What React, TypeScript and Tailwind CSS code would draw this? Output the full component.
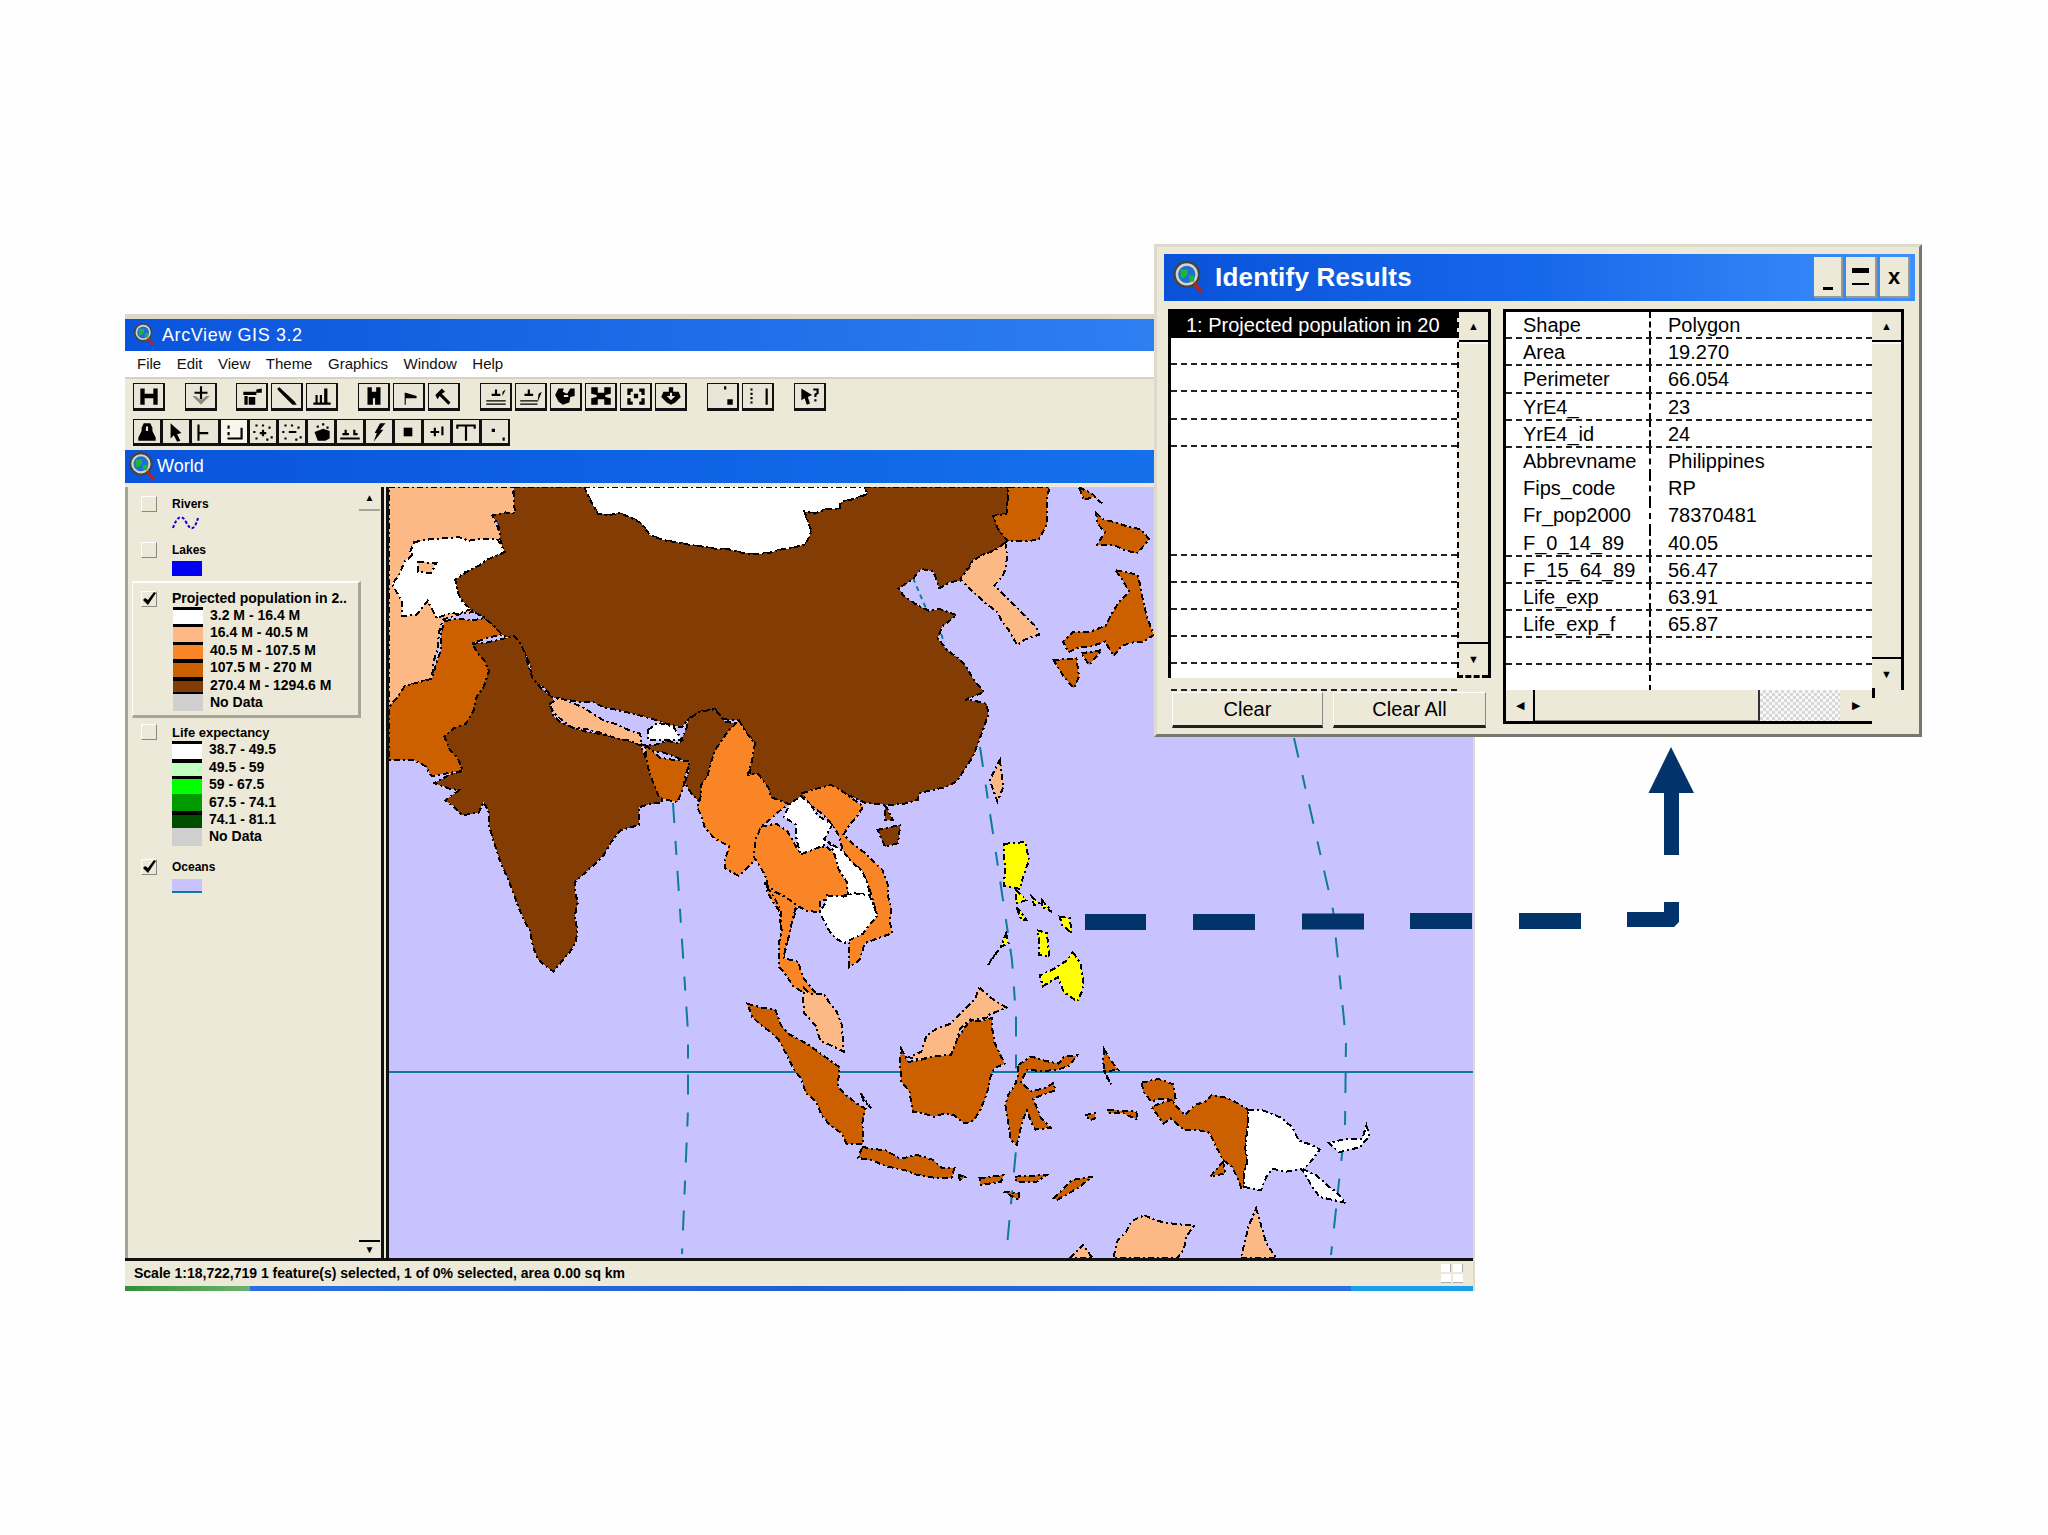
import type { ReactNode } from "react";

const PEACH = "#fcb985";
const ORANGE = "#fa8526";
const RUST = "#cc5f00";
const BROWN = "#843c05";
const YELLOW = "#ffff00";
const WHITE = "#ffffff";

type Shape = [string, string];

// points are in the pixel space of the upper map crop
const northShapes: Shape[] = [
  [PEACH, "18,22 258,22 268,95 225,105 245,175 250,210 180,400 120,420 100,590 50,620 45,675 18,680"],
  [WHITE, "400,22 950,22 955,40 905,60 900,90 830,100 845,150 830,195 735,228 640,195 555,185 490,108 425,95"],
  [WHITE, "70,185 125,175 230,182 248,210 215,240 185,265 150,295 150,340 178,350 180,390 115,410 95,360 70,400 40,405 45,360 22,315 35,285 50,250 70,225 60,225"],
  [PEACH, "75,245 110,250 100,280 75,275"],
  [RUST, "125,420 205,420 240,460 180,490 215,575 170,730 125,770 160,870 105,890 65,835 18,840 18,680 50,620 100,590 120,510"],
  [BROWN, "262,22 400,22 425,95 490,108 555,185 640,195 735,228 830,195 845,150 830,100 900,90 905,60 955,40 950,22 1230,22 1230,95 1205,110 1225,175 1225,190 1165,240 1140,295 1100,325 1085,270 1065,265 1020,325 1030,350 1075,395 1100,385 1130,405 1100,440 1090,480 1135,540 1180,630 1150,655 1190,675 1185,740 1165,830 1130,905 1060,940 1050,965 1000,975 950,970 885,915 800,975 770,950 745,885 725,890 735,790 700,725 670,720 660,690 630,695 605,720 590,740 510,700 340,650 300,605 285,520 270,490 240,460 205,420 180,400 150,340 150,295 215,240 248,210 225,105 268,95"],
  [BROWN, "180,490 260,470 285,520 295,600 335,650 335,700 375,745 510,795 525,840 550,965 510,985 505,1030 470,1055 420,1160 385,1200 385,1380 375,1410 340,1475 310,1440 260,1240 220,1070 205,960 195,1000 160,1005 130,955 155,935 110,905 160,870 125,770 170,730 215,575"],
  [BROWN, "510,795 590,785 605,720 630,695 660,690 680,720 700,730 665,790 640,885 625,970 600,910 605,850"],
  [PEACH, "335,675 350,655 400,680 440,720 510,760 512,795 430,760 375,745 340,705"],
  [WHITE, "525,750 545,728 575,740 592,780 525,780"],
  [RUST, "520,800 550,830 605,845 600,890 580,965 550,960 530,880"],
  [ORANGE, "700,725 735,790 725,885 745,885 770,950 800,975 770,1015 745,1040 740,1130 705,1190 680,1170 680,1100 640,1040 620,985 640,885 665,780"],
  [ORANGE, "745,1040 780,1025 825,1120 880,1095 915,1180 920,1240 865,1260 860,1300 815,1280 810,1310 790,1440 780,1300 745,1160 735,1130"],
  [ORANGE, "825,945 885,915 945,975 905,1070 985,1170 1005,1290 1000,1360 950,1390 940,1440 920,1461 920,1390 970,1300 960,1210 905,1110 885,1030"],
  [WHITE, "820,945 885,1030 870,1080 905,1110 960,1210 960,1240 920,1240 885,1090 825,1120 815,1040 790,1015"],
  [WHITE, "880,1245 960,1240 970,1310 945,1360 910,1390 880,1350 860,1300"],
  [BROWN, "975,1050 1020,1035 1015,1090 990,1100"],
  [BROWN, "990,975 1005,1020 990,1020"],
  [PEACH, "1215,840 1222,920 1210,965 1195,900"],
  [PEACH, "1225,190 1230,265 1205,320 1230,350 1285,440 1290,465 1245,490 1235,450 1210,400 1185,370 1140,290 1165,240"],
  [RUST, "1232,22 1312,22 1305,130 1290,180 1240,180 1225,175 1205,110 1230,95"],
  [RUST, "1370,22 1395,40 1415,70 1400,50 1380,60"],
  [RUST, "1400,95 1440,130 1495,150 1505,175 1480,215 1440,195 1410,200 1420,160"],
  [RUST, "1440,265 1490,290 1505,420 1515,470 1450,500 1435,530 1420,490 1345,510 1335,490 1360,460 1420,440 1430,400 1465,340"],
  [RUST, "1375,520 1415,510 1390,555"],
  [RUST, "1320,540 1365,535 1370,590 1360,625 1340,590"],
];

// points are in the pixel space of the lower map crop
const southShapes: Shape[] = [
  [ORANGE, "130,250 185,320 175,400 165,470 190,480 215,570 240,600 210,590 185,555 155,505 160,400 155,330"],
  [PEACH, "200,570 240,580 270,640 285,755 240,720 205,640"],
  [YELLOW, "600,130 635,130 645,185 630,230 625,270 600,260 595,210"],
  [YELLOW, "620,270 640,300 620,310"],
  [YELLOW, "650,290 665,310 655,315"],
  [YELLOW, "670,300 690,335 670,320"],
  [YELLOW, "705,350 725,355 728,400 710,375"],
  [YELLOW, "620,320 640,360 630,360"],
  [YELLOW, "600,400 605,430 590,440"],
  [YELLOW, "585,450 565,495 570,480"],
  [YELLOW, "660,390 680,400 685,470 665,465 665,420"],
  [YELLOW, "735,460 755,530 740,610 710,580 700,530 670,560 665,530 695,505"],
  [RUST, "395,750 410,780 470,770 525,660 570,660 575,720 590,770 600,790 575,800 565,860 540,960 515,975 495,945 455,945 415,930 410,880 395,850 390,790"],
  [PEACH, "550,565 565,590 605,620 570,640 565,658 525,658 490,765 435,780 410,775 435,750 440,710 490,670 520,635"],
  [RUST, "95,610 145,630 160,680 220,740 275,805 270,860 320,930 320,1035 290,1030 210,880 170,770 150,720 100,650"],
  [RUST, "315,880 335,925 320,900"],
  [RUST, "320,1045 360,1055 395,1075 425,1060 460,1085 470,1105 495,1110 495,1135 420,1125 400,1105 365,1105 310,1070"],
  [RUST, "505,1125 522,1130 510,1140"],
  [RUST, "548,1135 595,1125 590,1145 550,1155"],
  [RUST, "618,1130 680,1125 660,1145 620,1145"],
  [RUST, "693,1195 730,1140 770,1130 740,1165 700,1200"],
  [RUST, "595,1175 625,1180 625,1200"],
  [RUST, "625,800 650,775 700,790 735,760 725,800 700,810 640,805 625,850 650,880 695,845 695,865 650,900 670,950 685,980 655,995 640,930 625,1030 610,1025 600,920 615,860"],
  [RUST, "790,750 810,780 815,810 795,810 810,850 795,830"],
  [RUST, "800,930 855,935 858,960 830,940 800,940"],
  [RUST, "755,945 775,940 775,955 765,960"],
  [RUST, "865,850 895,835 930,855 930,900 925,910 950,940 1005,880 1075,925 1070,1160 1065,1160 1025,1075 1000,1000 950,985 925,950 905,975 885,925 925,905 885,900 865,870"],
  [RUST, "1025,1085 1030,1120 1000,1130"],
  [WHITE, "1075,925 1140,950 1175,1020 1215,1050 1200,1090 1180,1105 1210,1130 1250,1180 1265,1210 1215,1190 1175,1110 1120,1110 1100,1165 1070,1160"],
  [WHITE, "1310,980 1315,1010 1290,1040 1255,1055 1230,1030 1260,1025 1295,1010"],
  [PEACH, "870,1240 890,1260 965,1275 935,1375 810,1375 815,1320 850,1270"],
  [PEACH, "725,1375 750,1335 770,1375"],
  [PEACH, "1090,1225 1110,1330 1130,1375 1060,1375 1075,1280"],
];

// the coast in the picture is stepped, so break each long edge into small jittered pieces
function noise(x: number, y: number) {
  const v = Math.sin(Math.round(x) * 12.9898 + Math.round(y) * 78.233) * 43758.5453;
  return v - Math.floor(v) - 0.5;
}

function roughen(points: string) {
  const pts = points.split(" ").map((p) => p.split(",").map(Number));
  const out: string[] = [];
  pts.forEach(([x, y], i) => {
    const [nx, ny] = pts[(i + 1) % pts.length];
    const n = Math.max(1, Math.round(Math.hypot(nx - x, (ny - y) * 0.65) / 26));
    for (let k = 0; k < n; k++) {
      const px = x + ((nx - x) * k) / n;
      const py = y + ((ny - y) * k) / n;
      const onFrame = px <= 18 || py <= 22 || py >= 1375;
      const small = pts.length < 6;
      const amp = onFrame || small ? 0 : 1;
      out.push(`${(px + amp * noise(px, py) * 9).toFixed(1)},${(py + amp * noise(py, px) * 13).toFixed(1)}`);
    }
  });
  return out.join(" ");
}

function Land({ shapes }: { shapes: Shape[] }) {
  return (
    <>
      {shapes.map(([fill, points], i) => (
        <polygon
          key={i}
          points={roughen(points)}
          fill={fill}
          stroke="#000"
          strokeWidth={2}
          strokeDasharray="6 3 2 3"
          vectorEffect="non-scaling-stroke"
          shapeRendering="crispEdges"
        />
      ))}
    </>
  );
}

function MapView() {
  return (
    <svg viewBox="389 487 1084 771" className="block w-[1084px] h-[771px]">
      <rect x="389" y="487" width="1084" height="771" fill="#c8c3ff" />
      <g fill="none" stroke="#0f7a9c" strokeWidth="2" strokeDasharray="20 18 14 16">
        <polyline points="673,803 688,1032 688,1110 682,1254" />
        <polyline points="980,747 1012,960 1016,1017 1016,1150 1006,1257" />
        <polyline points="1294,738 1333,910 1346,1040 1345,1127 1331,1255" />
        <polyline points="913,578 928,613 941,633 944,643" strokeDasharray="5 4" />
      </g>
      <line x1="389" y1="1072" x2="1473" y2="1072" stroke="#0f7a9c" strokeWidth="2" />
      <g transform="translate(380 480) scale(0.5102 0.3333)">
        <Land shapes={northShapes} />
      </g>
      <g transform="translate(700 800) scale(0.5102 0.3333)">
        <Land shapes={southShapes} />
      </g>
    </svg>
  );
}

function GlobeIcon({ className }: { className: string }) {
  return (
    <svg viewBox="0 0 26 28" className={className}>
      <circle cx="12" cy="11" r="10" fill="#d5d5cc" stroke="#444" strokeWidth="2" />
      <circle cx="12" cy="11" r="7" fill="#1d6fd1" />
      <path d="M7 7h6v4l-3 3H7zM14 12h4v5h-4z" fill="#1fb33a" />
      <path d="M18 18l6 8" stroke="#b3261e" strokeWidth="3" />
    </svg>
  );
}

const toolIcons: Record<string, ReactNode> = {
  save: <path d="M4 3h16v15H4zM8 3v5h8V3zM8 12v6h8v-6z" fillRule="evenodd" />,
  add: (
    <>
      <path d="M11 1h2v5h5v2h-5v5h-2V8H6V6h5z" />
      <path d="M4 10l8 8 8-8-3 0-5 4-5-4z" fill="#8a8a80" />
    </>
  ),
  table: <path d="M4 6h12v3H4zM5 10h3v8H5zM9 11h6v7H9zM16 4l5-1v4h-5z" />,
  line: <path d="M3 3l2-1 14 13 2 3-4 0L4 5z" />,
  chart: <path d="M4 16h16v2H4zM6 9h2v7H6zM10 9h2v7h-2zM14 3h3v13h-3z" />,
  find: <path d="M6 2h4v4h4V2h4v16h-5v-6h-2v6H6z" />,
  flag: <path d="M8 7h1v11H8zM9 7l10 3v2H9z" />,
  tool: <path d="M4 9l6-6 3 3-3 2 8 8-2 2-8-8-2 3z" />,
  pos: <path d="M3 14h18v1H3zM3 17h18v1H3zM11 4h2v4h3v2H8V8h3zM18 6l3-2-3 6z" />,
  pos2: <path d="M2 14h16v1H2zM2 17h16v1H2zM9 4h2v4h3v2H6V8h3zM19 8l3-2-4 10z" />,
  zoomIn: <path d="M5 3h5l-1 3 4 2 3-5h4v7l-4 1-1 5-6 2-4-3-3-6zM10 9v2h4V9z" fillRule="evenodd" />,
  fit: <path d="M3 2h6v5h6V2h6v6l-5 1v2l5 1v6h-6v-5H9v5H3v-6l5-1V9L3 8z" />,
  extents: <path d="M4 3h5v3H7v3H4zM15 3h5v6h-3V6h-2zM4 12h3v3h2v3H4zM17 12h3v6h-5v-3h2zM10 8h4v4h-4z" />,
  pan: <path d="M10 2h4v4h5l2 5-5 5-4 2-4-2-5-5 2-5h5zM11 7v3H8l4 4 4-4h-3V7z" fillRule="evenodd" />,
  layout: <path d="M13 1h2v3h-2zM16 13h5v5h-5z" />,
  sheet: <path d="M5 3h2v2H5zM5 7h2v2H5zM5 11h2v2H5zM5 15h2v2H5zM19 3h2v15h-2z" />,
  help: <path d="M4 3l10 6-4 2 2 6-3 1-2-6-3 2zM15 3h5v5l-2 1v2h-2V8l2-1V5h-3zM16 13h2v2h-2z" />,
  identify: <path d="M9 2h6l2 4v3l3 6v3H4v-3l3-6V6zM11 5v4h2V5z" fillRule="evenodd" />,
  pointer: <path d="M7 2l10 9-4 1 3 6-3 1-3-6-3 3z" />,
  vertex: <path d="M5 3h2v15H5zM7 10h8v2H7z" />,
  select: <path d="M6 4h2v3H6zM6 10h2v3H6zM6 15h14v2H6zM18 6h2v9h-2z" />,
  zin: <path d="M5 3h2v2H5zM11 3h2v2h-2zM17 5h2v2h-2zM3 9h2v2H3zM19 14h2v2h-2zM5 15h2v2H5zM11 8h2v2h2v2h-2v2h-2v-2H9v-2h2zM15 16h2v2h-2z" />,
  zout: <path d="M5 3h2v2H5zM11 3h2v2h-2zM17 5h2v2h-2zM3 9h2v2H3zM19 14h2v2h-2zM5 15h2v2H5zM9 9h7v2H9zM15 16h2v2h-2z" />,
  area: <path d="M13 2h2v2h-2zM8 4h2v2H8zM17 5h2v2h-2zM6 10l8-3 6 2v7l-4 2H9z" />,
  measure: <path d="M3 15h18v2H3zM7 8h2v3h2v2H5v-2h2zM15 8h2v3h2v2h-4z" />,
  bolt: <path d="M13 2h5l-5 6h3L7 19l3-8H8z" />,
  square: <path d="M8 6h8v8H8z" />,
  vert: <path d="M6 9h3V6h2v3h3v2h-3v3H9v-3H6zM16 5h2v8h-2z" />,
  text: <path d="M3 3h18v2h-8v13h-2V5H3zM3 5h2v2H3zM19 5h2v2h-2z" />,
  dot: <path d="M9 7h3v3H9zM19 15h2v3h-2z" />,
};

function ToolButton({ icon, pressed, className = "" }: { icon: string; pressed?: boolean; className?: string }) {
  return (
    <div
      className={`flex items-center justify-center border border-[#111] border-b-[3px] border-r-[2px] ${
        pressed ? "bg-[#f7f5ec]" : "bg-[#e9e6d7]"
      } ${className}`}
    >
      <svg viewBox="0 0 24 20" className="w-[26px] h-[22px]" fill="#000">
        {toolIcons[icon]}
      </svg>
    </div>
  );
}

function ToolRow1() {
  const groups = [
    { icons: ["save"], mr: "mr-[20px]" },
    { icons: ["add"], mr: "mr-[19px]" },
    { icons: ["table", "line", "chart"], mr: "mr-[20px]" },
    { icons: ["find", "flag", "tool"], mr: "mr-[20px]" },
    { icons: ["pos", "pos2", "zoomIn", "fit", "extents", "pan"], mr: "mr-[20px]" },
    { icons: ["layout", "sheet"], mr: "mr-[20px]" },
    { icons: ["help"], mr: "" },
  ];
  return (
    <div className="flex pl-[8px] h-[28px]">
      {groups.map((g, i) => (
        <div key={i} className={`flex gap-[3px] ${g.mr}`}>
          {g.icons.map((ic) => (
            <ToolButton key={ic} icon={ic} className="w-[32px] h-[28px]" />
          ))}
        </div>
      ))}
    </div>
  );
}

function ToolRow2() {
  const icons = ["identify", "pointer", "vertex", "select", "zin", "zout", "area", "measure", "bolt", "square", "vert", "text", "dot"];
  return (
    <div className="flex pl-[8px] h-[27px] mt-[8px]">
      {icons.map((ic) => (
        <ToolButton key={ic} icon={ic} pressed={ic === "select"} className="w-[29px] h-[27px]" />
      ))}
    </div>
  );
}

function Checkbox({ checked, className = "" }: { checked?: boolean; className?: string }) {
  return (
    <div className={`relative w-[16px] h-[16px] shrink-0 border border-[#fff] border-r-[#8a8a80] border-b-[#8a8a80] ${className}`}>
      {checked && (
        <svg viewBox="0 0 16 16" className="absolute inset-0 w-[16px] h-[16px]">
          <path d="M1 8l5 5 8-12-2-1-6 8-3-2z" fill="#000" />
        </svg>
      )}
    </div>
  );
}

type Swatch = { color: string; label: string; bar?: string };

function Swatches({ items }: { items: Swatch[] }) {
  return (
    <div className="flex flex-col">
      {items.map((s) => (
        <div key={s.label} className="flex items-stretch h-[17.4px]">
          <div className={`w-[30px] ml-[40px] ${s.bar ?? ""}`} style={{ backgroundColor: s.color }} />
          <span className="ml-[7px] text-[14px] leading-[17px] text-black font-bold whitespace-nowrap">{s.label}</span>
        </div>
      ))}
    </div>
  );
}

const popItems: Swatch[] = [
  { color: "#fff", label: "3.2 M - 16.4 M", bar: "border-t-[3px] border-black" },
  { color: PEACH, label: "16.4 M - 40.5 M", bar: "border-t-[3px] border-black" },
  { color: ORANGE, label: "40.5 M - 107.5 M", bar: "border-t-[3px] border-black" },
  { color: RUST, label: "107.5 M - 270 M", bar: "border-t-[4px] border-black" },
  { color: BROWN, label: "270.4 M - 1294.6 M", bar: "border-t-[4px] border-b-[2px] border-black" },
  { color: "#cfcfcf", label: "No Data" },
];

const lifeItems: Swatch[] = [
  { color: "#fff", label: "38.7 - 49.5", bar: "border-t-[3px] border-black" },
  { color: "#c0ffc0", label: "49.5 - 59", bar: "border-t-[4px] border-black" },
  { color: "#00ff00", label: "59 - 67.5", bar: "border-t-[3px] border-black" },
  { color: "#009900", label: "67.5 - 74.1" },
  { color: "#004d00", label: "74.1 - 81.1", bar: "border-t-[4px] border-black" },
  { color: "#cfcfcf", label: "No Data" },
];

function Legend() {
  return (
    <div className="relative w-[256px] h-[771px] bg-[#ece9d8] border-l-[3px] border-[#a5a598] pl-[4px] pt-[9px]">
      <div className="flex items-center pl-[9px] h-[16px]">
        <Checkbox />
        <span className="ml-[15px] text-[12px] font-bold">Rivers</span>
      </div>
      <svg viewBox="0 0 30 18" className="ml-[40px] mt-[2px] w-[30px] h-[18px]">
        <path d="M1 14C5 2 10 0 14 8s8 10 12-4" fill="none" stroke="#0000e0" strokeWidth="2" strokeDasharray="3 2" />
      </svg>
      <div className="flex items-center pl-[9px] h-[16px] mt-[10px]">
        <Checkbox />
        <span className="ml-[15px] text-[12px] font-bold">Lakes</span>
      </div>
      <div className="ml-[40px] mt-[3px] w-[30px] h-[15px] bg-[#0000f0]" />
      <div className="w-[229px] mt-[5px] pt-[7px] pb-[4px] border-t-2 border-l border-white border-r-[3px] border-r-[#a5a598] border-b-[3px] border-b-[#a5a598]">
        <div className="flex items-center pl-[8px] h-[17px]">
          <Checkbox checked />
          <span className="ml-[15px] text-[14px] font-bold whitespace-nowrap">Projected population in 2..</span>
        </div>
        <Swatches items={popItems} />
      </div>
      <div className="flex items-center pl-[9px] h-[16px] mt-[6px]">
        <Checkbox />
        <span className="ml-[15px] text-[13px] font-bold">Life expectancy</span>
      </div>
      <div className="mt-[1px]">
        <Swatches items={lifeItems} />
      </div>
      <div className="flex items-center pl-[9px] h-[16px] mt-[13px]">
        <Checkbox checked />
        <span className="ml-[15px] text-[12px] font-bold">Oceans</span>
      </div>
      <div className="ml-[40px] mt-[4px] w-[30px] h-[14px] bg-[#c8c3ff] border-b-2 border-[#0f7a9c]" />
      <div className="absolute right-[1px] top-0 bottom-0 w-[21px] flex flex-col justify-between">
        <div className="h-[24px] border-b-2 border-[#a5a598] flex items-center justify-center text-[10px] leading-none">▲</div>
        <div className="h-[18px] border-t-2 border-black flex items-center justify-center text-[10px] leading-none">▼</div>
      </div>
    </div>
  );
}

function ScrollButton({ dir, className = "" }: { dir: string; className?: string }) {
  return (
    <div className={`flex items-center justify-center bg-[#ece9d8] text-[11px] leading-none text-black ${className}`}>{dir}</div>
  );
}

function VerticalScroll({ className = "" }: { className?: string }) {
  return (
    <div className={`flex flex-col bg-[#ece9d8] ${className}`}>
      <ScrollButton dir="▲" className="h-[30px] border-b-2 border-black" />
      <div className="flex-1 border-t-2 border-[#f8f7f0]" />
      <ScrollButton dir="▼" className="h-[33px] border-t-2 border-black" />
    </div>
  );
}

const FIELDS: [string, string][] = [
  ["Shape", "Polygon"],
  ["Area", "19.270"],
  ["Perimeter", "66.054"],
  ["YrE4_", "23"],
  ["YrE4_id", "24"],
  ["Abbrevname", "Philippines"],
  ["Fips_code", "RP"],
  ["Fr_pop2000", "78370481"],
  ["F_0_14_89", "40.05"],
  ["F_15_64_89", "56.47"],
  ["Life_exp", "63.91"],
  ["Life_exp_f", "65.87"],
  ["", ""],
  ["", ""],
];

const rowLine = (i: number) => (i >= 5 && i <= 7 ? "" : "border-b-2 border-dashed border-[#222]");

function IdentifyDialog() {
  return (
    <div className="absolute left-[1154px] top-[244px] w-[768px] h-[493px] bg-[#ece9d8] border-[3px] border-[#dedbcc] border-r-[#77776e] border-b-[#77776e] pt-[7px] pl-[7px] pr-[4px] font-['Liberation_Sans',sans-serif]">
      <div className="flex items-center h-[47px] bg-gradient-to-r from-[#0a52d8] via-[#1668ea] to-[#3d90fb] pl-[8px] pr-[5px]">
        <GlobeIcon className="w-[32px] h-[36px]" />
        <span className="ml-[11px] text-[26px] font-bold text-white tracking-[0.2px] whitespace-nowrap">Identify Results</span>
        <div className="ml-auto flex gap-[3px]">
          <div className="w-[29px] h-[41px] bg-[#ece9d8] border-r-2 border-b-2 border-[#9a9a8e] flex items-end justify-center pb-[6px]">
            <div className="w-[10px] h-[3px] bg-black" />
          </div>
          <div className="w-[31px] h-[41px] bg-[#ece9d8] border-r-2 border-b-2 border-[#9a9a8e] flex flex-col items-center justify-center gap-[10px]">
            <div className="w-[17px] h-[5px] bg-black" />
            <div className="w-[17px] h-[2px] bg-black" />
          </div>
          <div className="w-[30px] h-[41px] bg-[#ece9d8] border-r-2 border-b-2 border-[#9a9a8e] flex items-center justify-center text-[22px] font-bold leading-none text-black">x</div>
        </div>
      </div>
      <div className="flex mt-[8px]">
        <div className="w-[323px] ml-[4px]">
          <div className="flex h-[369px] border-t-[3px] border-l-[3px] border-r-[3px] border-black bg-white">
            <div className="flex-1 min-w-0">
              <div className="h-[26px] bg-black text-white text-[20px] leading-[26px] pl-[15px] whitespace-nowrap">1: Projected population in 20</div>
              {Array.from({ length: 13 }).map((_, i) => (
                <div key={i} className={`h-[27.2px] ${i >= 4 && i <= 6 ? "" : "border-b-2 border-dashed border-[#222]"}`} />
              ))}
            </div>
            <VerticalScroll className="w-[31px] border-l-2 border-dashed border-black border-b-[3px] border-b-black" />
          </div>
          <div className="flex gap-[10px] mt-[14px] ml-[4px]">
            <button className="w-[151px] h-[36px] bg-[#ece9d8] border-t border-l border-white border-b-[3px] border-b-[#222] border-r border-r-[#888] text-[20px] text-black">Clear</button>
            <button className="w-[153px] h-[36px] bg-[#ece9d8] border-t border-l border-white border-b-[3px] border-b-[#222] border-r border-r-[#888] text-[20px] text-black">Clear All</button>
          </div>
        </div>
        <div className="ml-[12px] w-[401px] h-[415px] flex flex-col">
          <div className="flex h-[381px] border-t-[3px] border-l-[3px] border-r-[3px] border-black bg-white">
            <div className="flex-1 min-w-0">
              {FIELDS.map(([k, v], i) => (
                <div key={i} className={`flex h-[27.2px] text-[20px] leading-[27px] text-black ${rowLine(i)}`}>
                  <div className="w-[145px] pl-[17px] border-r-2 border-dashed border-black whitespace-nowrap">{k}</div>
                  <div className="pl-[17px] whitespace-nowrap">{v}</div>
                </div>
              ))}
            </div>
            <VerticalScroll className="w-[29px]" />
          </div>
          <div className="flex h-[34px]">
            <div className="flex w-[369px] border-l-[3px] border-b-[3px] border-black">
              <ScrollButton dir="◀" className="w-[29px] border-r-2 border-black" />
              <div className="w-[225px] bg-[#ece9d8] border-r-2 border-[#333] border-b border-b-[#888]" />
              <div className="w-[80px] bg-[repeating-conic-gradient(#d8d8d8_0_25%,#f8f8f8_0_50%)] bg-[length:6px_6px]" />
              <ScrollButton dir="▶" className="flex-1" />
            </div>
            <div className="border-l-[3px] border-black w-[32px] -mt-[2px] h-[10px]" />
          </div>
        </div>
      </div>
    </div>
  );
}

function FlowArrow() {
  return (
    <svg viewBox="0 0 2048 1535" className="absolute left-0 top-0 w-[2048px] h-[1535px] pointer-events-none">
      <g fill="#02336a">
        <rect x="1085" y="914" width="61" height="16" />
        <rect x="1193" y="914" width="62" height="16" />
        <rect x="1302" y="913.500" width="62" height="16" />
        <rect x="1410" y="913" width="62" height="16" />
        <rect x="1519" y="913" width="62" height="16" />
        <path d="M1627 912h37v-10h15v20l-5 5h-47z" />
        <rect x="1664" y="793" width="15" height="62" />
        <polygon points="1671,747 1694,793 1648.500,793" />
      </g>
    </svg>
  );
}

function App() {
  return (
    <div className="relative w-[2048px] h-[1535px] overflow-hidden bg-[#fefefe] pt-[314px] pl-[125px] font-['Liberation_Sans',sans-serif]">
      <div className="flex flex-col w-[1350px] border-r-[2px] border-[#dedbcc]">
        <div className="h-[5px] bg-[#dcd9ca]" />
        <div className="flex items-center h-[32px] bg-gradient-to-r from-[#0a54dc] to-[#3a8cf7] pl-[8px]">
          <GlobeIcon className="w-[22px] h-[24px]" />
          <span className="ml-[7px] text-[18px] text-white tracking-[0.6px]">ArcView GIS 3.2</span>
        </div>
        <div className="flex items-center h-[26px] bg-white pl-[12px] gap-[15.5px] text-[15px] text-[#111]">
          <span>File</span>
          <span>Edit</span>
          <span>View</span>
          <span>Theme</span>
          <span>Graphics</span>
          <span>Window</span>
          <span>Help</span>
        </div>
        <div className="h-[73px] bg-[#ece9d8] pt-[4px] border-t-2 border-[#d5d2c3]">
          <ToolRow1 />
          <ToolRow2 />
        </div>
        <div className="flex items-center h-[33px] bg-gradient-to-r from-[#0a54dc] to-[#1a78f0] pl-[3px]">
          <GlobeIcon className="w-[28px] h-[30px]" />
          <span className="ml-[1px] text-[18px] text-white">World</span>
        </div>
        <div className="flex h-[778px] bg-[#ece9d8] pt-[4px] border-b-[3px] border-[#111]">
          <Legend />
          <div className="w-[8px] border-l-[3px] border-r-[3px] border-[#111]" />
          <MapView />
        </div>
        <div className="flex items-center justify-between h-[25px] bg-[#ece9d8] pl-[9px] pr-[10px] text-[14px] font-bold text-black whitespace-nowrap">
          <span>Scale 1:18,722,719  1 feature(s) selected, 1 of 0% selected, area 0.00 sq km</span>
          <div className="grid grid-cols-2 gap-[2px] w-[22px] h-[19px]">
            <div className="border-r border-[#aaa] bg-white" />
            <div className="border-r border-[#aaa] bg-white" />
            <div className="border-b border-[#aaa] bg-white" />
            <div className="border-b border-[#aaa] bg-white" />
          </div>
        </div>
        <div className="flex h-[5px]">
          <div className="w-[125px] bg-gradient-to-r from-[#2f8f3a] to-[#6db36d]" />
          <div className="flex-1 bg-gradient-to-r from-[#2a6fe4] via-[#1f5fd6] to-[#2a6fe4]" />
          <div className="w-[122px] bg-[#1aa0e8]" />
        </div>
      </div>
      <IdentifyDialog />
      <FlowArrow />
    </div>
  );
}

export default App;
